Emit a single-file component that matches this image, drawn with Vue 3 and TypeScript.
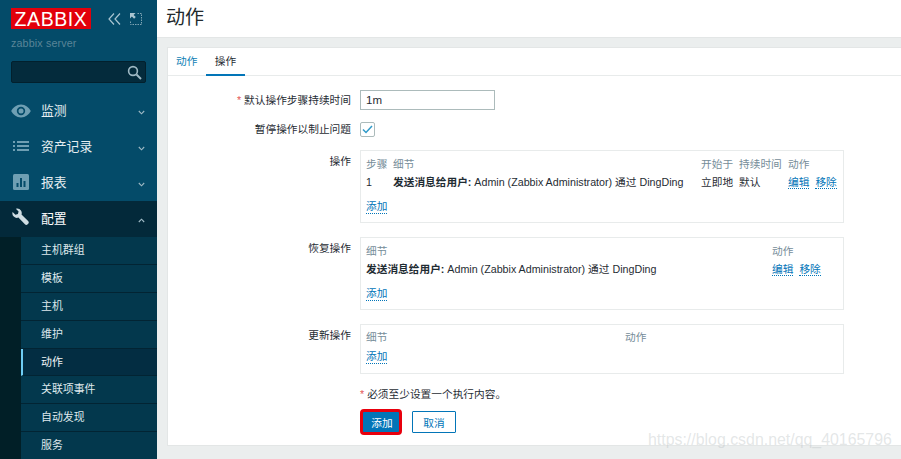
<script setup lang="ts">
interface MenuItem { label: string; icon: string; open?: boolean }
const menu: MenuItem[] = [
  { label: '监测', icon: 'eye' },
  { label: '资产记录', icon: 'list' },
  { label: '报表', icon: 'chart' },
  { label: '配置', icon: 'wrench', open: true },
]
const subItems = ['主机群组', '模板', '主机', '维护', '动作', '关联项事件', '自动发现', '服务']
</script>

<template>
  <div class="page">
    <aside class="sidebar">
      <div class="brand">
        <div class="logo">ZABBIX</div>
        <div class="brand-tools">
          <svg width="13" height="12" viewBox="0 0 13 12" fill="none" stroke="#a9c5d1" stroke-width="1.2"><path d="M6 .5 1 6l5 5.500M12 .5 7 6l5 5.500" /></svg>
          <svg width="12" height="12" viewBox="0 0 12 12" fill="none"><path d="M0 5.500V0h5.500L3.600 1.900 5.800 4.100 4.100 5.800 1.900 3.600Z" fill="#a9c5d1" /><path d="M7.500.5h4v11H.5v-4" stroke="#7fa5b5" stroke-dasharray="1.500 1" /></svg>
        </div>
      </div>
      <div class="server">zabbix server</div>
      <div class="search">
        <svg width="15" height="15" viewBox="0 0 15 15" fill="none" stroke="#9fb9c4" stroke-width="1.6"><circle cx="6" cy="6" r="4.4" /><path d="m9.500 9.500 4.500 4.500" stroke-width="2" /></svg>
      </div>
      <nav class="menu">
        <div v-for="m in menu" :key="m.label" class="menu-row" :class="{ open: m.open }">
          <span class="menu-icon" :class="'i-' + m.icon">
            <svg v-if="m.icon === 'eye'" width="20" height="14" viewBox="0 0 20 14"><path d="M10 .5C5.500.5 2 3.500.2 7 2 10.500 5.500 13.500 10 13.500S18 10.500 19.800 7C18 3.500 14.500.5 10 .5Zm0 10.700A4.200 4.200 0 1 1 10 2.800a4.200 4.200 0 0 1 0 8.400Z" fill="#6f9fb3" /><circle cx="10" cy="7" r="2.500" fill="#6f9fb3" /></svg>
            <svg v-else-if="m.icon === 'list'" width="16" height="10" viewBox="0 0 16 10" fill="#6f9fb3"><path d="M0 0h2v2H0zM0 4h2v2H0zM0 8h2v2H0zM4 0h12v2H4zM4 4h12v2H4zM4 8h12v2H4z" /></svg>
            <svg v-else-if="m.icon === 'chart'" width="16" height="16" viewBox="0 0 16 16"><rect width="16" height="16" rx="1.500" fill="#6f9fb3" /><path d="M3.500 9h2v4h-2zM7 4h2v9H7zM10.500 7h2v6h-2z" fill="#054c6a" /></svg>
            <svg v-else width="17" height="17" viewBox="0 0 17 17"><path d="M5.300.5a4.500 4.500 0 0 1 4.200 6l6.600 6.500a2 2 0 0 1 0 2.800l-.4.400a2 2 0 0 1-2.800 0L6.400 9.600A4.500 4.500 0 0 1 .6 4l2.800 2.700 2.500-.7.700-2.500L3.800.7a4.500 4.500 0 0 1 1.500-.2Z" fill="#cfdde3" /></svg>
          </span>
          <span class="menu-label">{{ m.label }}</span>
          <svg class="chev" width="7" height="5" viewBox="0 0 7 5" fill="none" stroke="#9fb9c4" stroke-width="1.100">
            <path :d="m.open ? 'M.8 4 3.500 1.200 6.200 4' : 'M.8 1 3.500 3.800 6.200 1'" />
          </svg>
        </div>
      </nav>
      <div class="submenu">
        <div v-for="s in subItems" :key="s" class="sub-row" :class="{ active: s === '动作' }">{{ s }}</div>
      </div>
    </aside>

    <main class="main">
      <header class="topbar"><h1>动作</h1></header>
      <section class="panel">
        <div class="tabs">
          <span class="tab">动作</span>
          <span class="tab current">操作</span>
        </div>
        <div class="form">
          <div class="field f-duration">
            <label><i>*</i> 默认操作步骤持续时间</label>
            <input class="text-input" value="1m" />
          </div>
          <div class="field f-pause">
            <label>暂停操作以制止问题</label>
            <span class="check">
              <svg width="11" height="9" viewBox="0 0 11 9" fill="none" stroke="#2f9ac9" stroke-width="1.500"><path d="M1 4.500 4 7.500 10 1" /></svg>
            </span>
          </div>
          <div class="field f-box">
            <label>操作</label>
            <div class="box box-a">
              <table>
                <colgroup><col style="width:27px" /><col /><col style="width:38px" /><col style="width:49px" /><col style="width:50px" /></colgroup>
                <thead><tr><th>步骤</th><th>细节</th><th>开始于</th><th>持续时间</th><th>动作</th></tr></thead>
                <tbody>
                  <tr>
                    <td>1</td>
                    <td><b>发送消息给用户:</b> Admin (Zabbix Administrator) 通过 DingDing</td>
                    <td>立即地</td>
                    <td>默认</td>
                    <td><a>编辑</a><a class="next">移除</a></td>
                  </tr>
                </tbody>
              </table>
              <a class="add">添加</a>
            </div>
          </div>
          <div class="field f-box">
            <label>恢复操作</label>
            <div class="box box-a">
              <table>
                <colgroup><col /><col style="width:66px" /></colgroup>
                <thead><tr><th>细节</th><th>动作</th></tr></thead>
                <tbody>
                  <tr>
                    <td><b>发送消息给用户:</b> Admin (Zabbix Administrator) 通过 DingDing</td>
                    <td><a>编辑</a><a class="next">移除</a></td>
                  </tr>
                </tbody>
              </table>
              <a class="add">添加</a>
            </div>
          </div>
          <div class="field f-box">
            <label>更新操作</label>
            <div class="box box-b">
              <div class="b-head"><span>细节</span><span>动作</span></div>
              <a class="add">添加</a>
            </div>
          </div>
          <p class="note"><i>*</i> 必须至少设置一个执行内容。</p>
          <div class="actions">
            <button class="btn primary">添加</button>
            <button class="btn ghost">取消</button>
          </div>
        </div>
      </section>
    </main>
    <div class="watermark">https://blog.csdn.net/qq_40165796</div>
  </div>
</template>

<style>
html, body { margin: 0; overflow: hidden; }
</style>

<style scoped>
.page {
  position: relative;
  display: flex;
  width: 901px;
  height: 459px;
  overflow: hidden;
  background: #ebeeee;
  font-family: "Liberation Sans", "Noto Sans CJK SC", sans-serif;
  font-size: 10.7px;
  color: #1f2c33;
}
.sidebar {
  flex: 0 0 157px;
  height: 459px;
  background: #044b69;
  overflow: hidden;
  box-sizing: border-box;
}
.brand { display: flex; align-items: center; padding: 8px 0 0 11px; height: 21px; }
.logo {
  width: 80px;
  height: 21px;
  background: #e2000b;
  color: #fff;
  font-size: 19.500px;
  line-height: 22px;
  text-align: center;
  letter-spacing: .6px;
}
.brand-tools { display: flex; align-items: center; gap: 9px; margin-left: 17px; }
.server { margin: 7px 0 0 11px; height: 14px; line-height: 14px; font-size: 10.700px; color: #5a8598; letter-spacing: .15px; }
.search {
  display: flex;
  justify-content: flex-end;
  align-items: center;
  box-sizing: border-box;
  width: 135px;
  height: 22px;
  margin: 11px 0 0 11px;
  padding-right: 3px;
  background: #042b3c;
  border: 1px solid #02202d;
  border-radius: 2px;
}
.menu { margin-top: 10px; }
.menu-row { display: flex; align-items: center; box-sizing: border-box; height: 36px; padding-bottom: 2px; color: #e6eef1; font-size: 12.800px; }
.menu-row.open { background: #03293a; color: #fff; }
.menu-icon { flex: 0 0 41px; display: flex; justify-content: center; margin-top: 1px; }
.menu-icon.i-list { margin-top: -1px; }
.menu-icon.i-chart { margin-top: -1px; }
.menu-icon.i-wrench { margin-top: -4px; }
.menu-label { flex: 1; margin-bottom: 2px; }
.chev { margin: 5px 12px 0 0; }
.submenu { background: #011f27; padding-left: 21px; }
.sub-row {
  box-sizing: border-box;
  height: 27.900px;
  line-height: 27.900px;
  padding-left: 20px;
  background: #03384d;
  border-bottom: 1px solid #022433;
  color: #dfe8ec;
  font-size: 10.900px;
}
.sub-row.active { background: #032d42; border-left: 2px solid #6fcdf5; padding-left: 18px; color: #f2f6f8; }
.main { flex: 1; min-width: 0; }
.topbar { height: 37px; background: #fff; border-bottom: 1px solid #e3e6e6; padding-left: 9px; }
.topbar h1 { margin: 0; font-size: 19px; font-weight: 400; line-height: 36px; color: #22292d; }
.panel {
  margin: 9px 0 0 10px;
  height: 399px;
  background: #fff;
  border-top: 1px solid #e3e6e6;
  border-left: 1px solid #e3e6e6;
  border-bottom: 1px solid #e3e6e6;
  box-sizing: border-box;
}
.tabs { display: flex; height: 28px; border-bottom: 1px solid #e8ebeb; box-sizing: border-box; }
.tab { display: block; box-sizing: border-box; width: 38px; height: 28px; line-height: 26px; padding-left: 8px; color: #0f7fb5; white-space: nowrap; }
.tab.current { padding: 0; width: 39px; color: #1f2c33; border-bottom: 2px solid #0275b8; text-align: center; }
.form { padding-top: 14px; }
.field { display: flex; align-items: flex-start; }
.field label { flex: 0 0 183px; text-align: right; margin-right: 9px; line-height: 20px; }
.field label i, .note i { font-style: normal; color: #e45959; }
.f-duration { height: 20px; margin-bottom: 12px; }
.text-input {
  box-sizing: border-box;
  width: 135px;
  height: 20px;
  padding: 0 5px;
  border: 1px solid #acbbbb;
  background: #fff;
  font: inherit;
  font-size: 11.500px;
  color: #1f2c33;
  outline: none;
}
.f-pause { height: 15px; margin-bottom: 13px; }
.f-pause label { line-height: 15px; }
.check {
  box-sizing: border-box;
  width: 15px;
  height: 15px;
  display: flex;
  align-items: center;
  justify-content: center;
  border: 1px solid #acbbbb;
  border-radius: 2px;
}
.f-box { margin-bottom: 14px; }
.f-box label { line-height: 23px; }
.box {
  box-sizing: border-box;
  width: 484px;
  border: 1px solid #e8ebeb;
  padding: 0 5px;
}
.box-a { height: 73px; padding-top: 6px; }
.box-b { height: 50px; padding-top: 6px; }
table { width: 100%; table-layout: fixed; border-collapse: collapse; }
th { padding: 0; text-align: left; font-weight: 400; color: #768d99; line-height: 13px; height: 14px; }
td { padding: 0; line-height: 14px; height: 22px; white-space: nowrap; color: #1f2c33; }
td b { font-weight: 700; }
a { color: #0275b8; border-bottom: 1px dotted #0275b8; }
a.next { margin-left: 6px; }
.add { display: inline-block; margin-top: 7px; line-height: 13px; }
.b-head { display: flex; line-height: 13px; color: #768d99; }
.b-head span:first-child { width: 259px; }
.box-b .add { margin-top: 6px; }
.note { margin: 0 0 0 192px; height: 14px; line-height: 14px; }
.f-box + .note { margin-top: -1px; }
.actions { display: flex; align-items: center; gap: 10px; margin: 8px 0 0 192px; }
.btn {
  box-sizing: border-box;
  font: inherit;
  padding: 0;
}
.primary {
  width: 42px;
  height: 26px;
  padding-left: 2px;
  background: #0275b8;
  color: #fff;
  border: 3px solid #e8000d;
  border-radius: 4px;
}
.ghost { width: 44px; height: 22px; border-radius: 1px; background: #fff; color: #0275b8; border: 1px solid #0275b8; }
.watermark {
  position: absolute;
  left: 648px;
  top: 430px;
  font-size: 15.900px;
  line-height: 20px;
  color: rgba(190, 196, 198, .42);
  white-space: nowrap;
}
</style>
